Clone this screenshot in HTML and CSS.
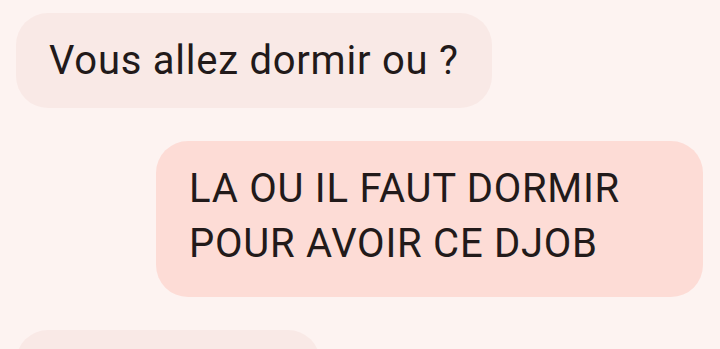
FILE: index.html
```html
<!DOCTYPE html>
<html>
<head>
	<title>Conversation</title>
	<link rel="stylesheet" href="styles.css">
</head>
<body>
	<div class="thread">
		<div class="msg in">Vous allez dormir ou ?</div>
		<div class="msg out">LA OU IL FAUT DORMIR<br>POUR AVOIR CE DJOB</div>
		<div class="msg in next">&nbsp;</div>
	</div>
</body>
</html>
```

FILE: styles.css
```css
html, body { margin: 0; height: 100%; overflow: hidden; }
body { background: #fdf3f1; font-family: Roboto, "Noto Sans", sans-serif; color: #221a1a; }
.thread { display: flex; flex-direction: column; gap: 33px; padding: 13px 17px 0 16px; }
.msg { font-size: 40px; line-height: 55px; letter-spacing: 0.75px; border-radius: 32px; padding: 20px 33px; }
.in { align-self: flex-start; background: #f9e9e6; }
.out { align-self: flex-end; background: #fddcd6; width: 481px; padding-bottom: 26px; }
.next { width: 238px; }
```
